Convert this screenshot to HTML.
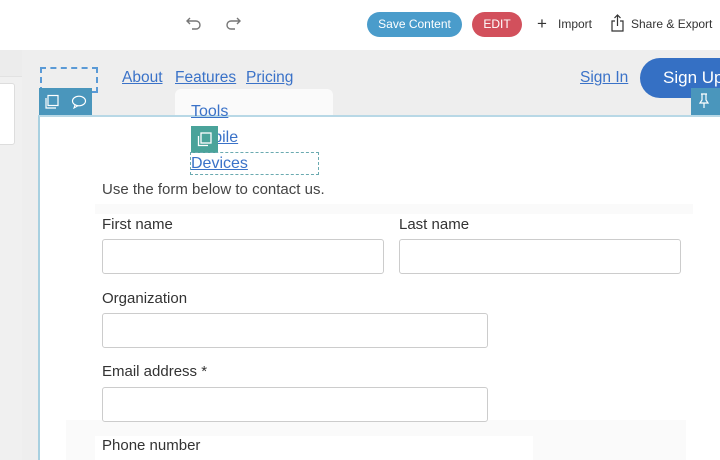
<!DOCTYPE html>
<html><head><meta charset="utf-8"><style>
*{margin:0;padding:0;box-sizing:border-box}
body{width:720px;height:460px;overflow:hidden;background:#fff;font-family:"Liberation Sans",sans-serif;position:relative}
.a{position:absolute}
a{color:#3a72c8;text-decoration:underline}
.lbl{position:absolute;font-size:15px;color:#333}
.inp{position:absolute;border:1px solid #ccc;border-radius:3px;background:#fff;height:35px}
</style></head><body>
<!-- top bar -->
<svg class="a" style="left:185px;top:15px" width="18" height="16" viewBox="0 0 18 16"><path d="M5 3 L2 6 L5 9 M2 6 H11 A4 4 0 0 1 11 14 H7" fill="none" stroke="#777" stroke-width="1.4"/></svg>
<svg class="a" style="left:224px;top:15px" width="18" height="16" viewBox="0 0 18 16"><path d="M13 3 L16 6 L13 9 M16 6 H7 A4 4 0 0 0 7 14 H11" fill="none" stroke="#777" stroke-width="1.4"/></svg>
<div class="a" style="left:367px;top:12px;width:95px;height:25px;border-radius:13px;background:#4a9ccb;color:#fff;font-size:12px;text-align:center;line-height:25px">Save Content</div>
<div class="a" style="left:472px;top:12px;width:50px;height:25px;border-radius:13px;background:#d2505c;color:#fff;font-size:12px;text-align:center;line-height:25px">EDIT</div>
<div class="a" style="left:537px;top:14px;font-size:17px;color:#333;line-height:20px">+</div>
<div class="a" style="left:558px;top:17px;font-size:12px;color:#333">Import</div>
<svg class="a" style="left:610px;top:14px" width="16" height="18" viewBox="0 0 16 18"><path d="M5 7 H2 V17 H13 V7 H10 M7.5 12 V1 M4.5 4 L7.5 1 L10.5 4" fill="none" stroke="#333" stroke-width="1.2"/></svg>
<div class="a" style="left:631px;top:17px;font-size:12px;color:#333">Share &amp; Export</div>
<!-- left panel -->
<div class="a" style="left:0;top:50px;width:22px;height:410px;background:#f0f0f0"></div>
<div class="a" style="left:0;top:50px;width:22px;height:27px;background:#ececec;border-bottom:1px solid #e2e2e2"></div>
<div class="a" style="left:-5px;top:83px;width:20px;height:62px;background:#fff;border:1px solid #ddd;border-radius:3px"></div>
<!-- canvas -->
<div class="a" style="left:22px;top:50px;width:698px;height:410px;background:#eee"></div>
<div class="a" style="left:38px;top:115px;width:682px;height:345px;background:#fff;border-left:2px solid #a8d0e0;border-top:2px solid #b8d8e6"></div>
<div class="a" style="left:66px;top:420px;width:620px;height:40px;background:#fafafa"></div>
<div class="a" style="left:40px;top:67px;width:58px;height:26px;border:2px dashed #5a9ad6"></div>
<div class="a" style="left:39px;top:88px;width:53px;height:27px;background:#4a96bc"></div>
<svg class="a" style="left:44px;top:94px" width="16" height="16" viewBox="0 0 16 16"><rect x="4" y="1.5" width="10" height="10" fill="none" stroke="#fff" stroke-width="1.2"/><path d="M2 4 V14 H12" fill="none" stroke="#fff" stroke-width="1.2"/></svg>
<svg class="a" style="left:71px;top:94px" width="16" height="15" viewBox="0 0 16 15"><ellipse cx="8" cy="7" rx="6.5" ry="4.8" fill="none" stroke="#fff" stroke-width="1.2"/><path d="M4 11 L3 14 L7 11.7" fill="none" stroke="#fff" stroke-width="1.1"/></svg>
<div class="a" style="left:122px;top:69px;font-size:15.5px"><a>About</a></div>
<div class="a" style="left:175px;top:69px;font-size:15.5px"><a>Features</a></div>
<div class="a" style="left:246px;top:69px;font-size:15.5px"><a>Pricing</a></div>
<div class="a" style="left:175px;top:89px;width:158px;height:26px;background:#fafafa;border-radius:6px 6px 0 0"></div>
<div class="a" style="left:191px;top:103px;font-size:16px"><a>Tools</a></div>
<div class="a" style="left:191px;top:129px;font-size:16px"><a>Mobile</a></div>
<div class="a" style="left:191px;top:126px;width:27px;height:27px;background:#4aa39a"></div>
<svg class="a" style="left:196px;top:131px" width="17" height="17" viewBox="0 0 17 17"><rect x="5" y="2" width="10" height="10" fill="none" stroke="#fff" stroke-width="1.3"/><path d="M2.5 5 V14.5 H12" fill="none" stroke="#fff" stroke-width="1.3"/></svg>
<div class="a" style="left:190px;top:152px;width:129px;height:23px;border:1px dashed #6aaab0"></div>
<div class="a" style="left:191px;top:155px;font-size:16px"><a>Devices</a></div>
<div class="a" style="left:580px;top:69px;font-size:15.5px"><a>Sign In</a></div>
<div class="a" style="left:640px;top:58px;width:110px;height:40px;border-radius:20px;background:#3570c4;color:#fff;font-size:17px;line-height:40px;padding-left:23px">Sign Up</div>
<div class="a" style="left:691px;top:88px;width:29px;height:27px;background:#4a96bc"></div>
<svg class="a" style="left:697px;top:93px" width="14" height="16" viewBox="0 0 14 16"><path d="M4 1 H10 M5 1 V7 L3 10 H11 L9 7 V1 M7 10 V15" fill="none" stroke="#fff" stroke-width="1.2"/></svg>
<!-- form -->
<div class="lbl" style="left:102px;top:181px;color:#444">Use the form below to contact us.</div>
<div class="a" style="left:95px;top:204px;width:598px;height:10px;background:#fafafa"></div>
<div class="lbl" style="left:102px;top:216px">First name</div>
<div class="lbl" style="left:399px;top:216px">Last name</div>
<div class="inp" style="left:102px;top:239px;width:282px"></div>
<div class="inp" style="left:399px;top:239px;width:282px"></div>
<div class="lbl" style="left:102px;top:290px">Organization</div>
<div class="inp" style="left:102px;top:313px;width:386px"></div>
<div class="lbl" style="left:102px;top:363px">Email address *</div>
<div class="inp" style="left:102px;top:387px;width:386px"></div>
<div class="a" style="left:95px;top:436px;width:438px;height:24px;background:#fff"></div>
<div class="lbl" style="left:102px;top:437px">Phone number</div>
</body></html>
